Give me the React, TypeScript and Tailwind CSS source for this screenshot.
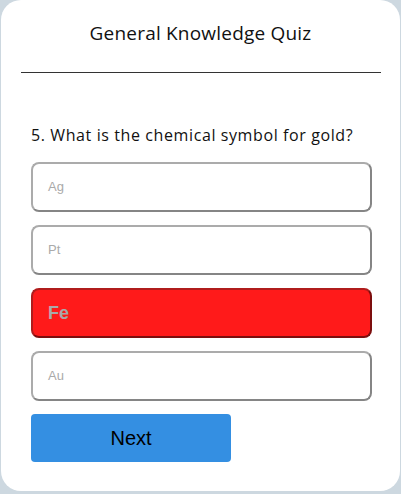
import React from "react";

export default function App() {
  const opts = ["Ag", "Pt", "Fe", "Au"];
  return (
    <div className="w-[401px] h-[494px] bg-[#cdd8e0] pl-px pb-[3px]">
      <div className="w-[399px] h-[491px] bg-white rounded-[20px] flex flex-col">
        <div className="h-[66px] flex items-center justify-center pt-[1px]">
          <h1 className="text-[19px] tracking-[0.2px] text-[#111] font-['Open_Sans',sans-serif]">General Knowledge Quiz</h1>
        </div>
        <div className="ml-[20px] mr-[19px] mt-[6px] h-px bg-[#333]" />
        <p className="mt-[52px] ml-[30px] text-[16px] leading-[20px] tracking-[0.6px] text-[#111] font-['Open_Sans',sans-serif]">
          5. What is the chemical symbol for gold?
        </p>
        <div className="ml-[30px] mr-[28px] mt-[17px] flex flex-col gap-[13px]">
          {opts.map((o) =>
            o === "Fe" ? (
              <div
                key={o}
                className="h-[50px] rounded-lg border-2 border-t-[#b01c1c] border-l-[#b01c1c] border-b-[#7c0e0e] border-r-[#7c0e0e] bg-[#ff1a1a] flex items-center pl-[15px] text-[18px] font-bold text-[#aaaaaa] font-['Liberation_Sans',Arial,sans-serif]"
              >
                {o}
              </div>
            ) : (
              <div
                key={o}
                className="h-[50px] rounded-lg border-2 border-t-[#ababab] border-l-[#ababab] border-b-[#858585] border-r-[#858585] bg-white flex items-center pl-[15px] text-[13px] text-[#aaaaaa] font-['Liberation_Sans',Arial,sans-serif]"
              >
                {o}
              </div>
            )
          )}
          <div className="w-[200px] h-[48px] rounded-[4px] bg-[#348fe2] flex items-center justify-center text-[20px] text-black font-['Liberation_Sans',Arial,sans-serif]">
            Next
          </div>
        </div>
      </div>
    </div>
  );
}
